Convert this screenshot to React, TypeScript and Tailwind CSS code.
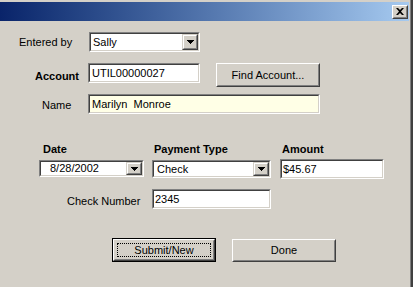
import React from 'react';

const Sunken: React.FC<{ className?: string; bg?: string; children?: React.ReactNode }> = ({ className = '', bg = 'bg-white', children }) => (
  <div className={`border border-t-[#808080] border-l-[#808080] border-b-white border-r-white ${className}`}>
    <div className={`h-full flex items-center border border-t-[#404040] border-l-[#404040] border-b-[#d4d0c8] border-r-[#d4d0c8] ${bg}`}>
      {children}
    </div>
  </div>
);

const DropButton: React.FC = () => (
  <div className="w-[16px] h-full border border-t-[#d4d0c8] border-l-[#d4d0c8] border-b-[#404040] border-r-[#404040]">
    <div className="h-full flex items-center justify-center bg-[#d4d0c8] border border-t-white border-l-white border-b-[#808080] border-r-[#808080]">
      <svg width="7" height="4" viewBox="0 0 7 4">
        <path d="M0 0h7v1h-1v1h-1v1h-1v1h-1v-1h-1v-1h-1v-1h-1z" fill="#000" />
      </svg>
    </div>
  </div>
);

const Combo: React.FC<{ value: string; className: string; textPad?: string }> = ({ value, className, textPad = 'pl-[2px]' }) => (
  <Sunken className={className}>
    <span className={`flex-1 ${textPad} leading-none`}>{value}</span>
    <DropButton />
  </Sunken>
);

const Button: React.FC<{ label: string; className: string; isDefault?: boolean }> = ({ label, className, isDefault }) => (
  <div className={`${isDefault ? 'border border-black' : ''} ${className}`}>
    <div className="h-full border border-t-white border-l-white border-b-[#404040] border-r-[#404040]">
      <div className="h-full p-[2px] bg-[#d4d0c8] border border-t-[#d4d0c8] border-l-[#d4d0c8] border-b-[#808080] border-r-[#808080]">
        <div className={`h-full flex items-center justify-center ${isDefault ? 'border border-dotted border-black' : ''}`}>
          {label}
        </div>
      </div>
    </div>
  </div>
);

export default function App() {
  return (
    <div className="w-[413px] h-[287px] overflow-hidden bg-[#d4d0c8] border-r-2 border-[#404040] text-[11px] text-black font-['Liberation_Sans',Arial,sans-serif]">
      <div className="h-full border-r border-[#808080] pt-[2px] pr-[1px]">
        {/* Title bar */}
        <div className="h-[19px] flex items-center justify-end pr-[1px] bg-linear-to-r from-[#0a246a] to-[#a6caf0]">
          <div className="w-[16px] h-[14px] border border-t-white border-l-white border-b-[#404040] border-r-[#404040]">
            <div className="h-full flex items-center justify-center bg-[#d4d0c8] border border-t-[#d4d0c8] border-l-[#d4d0c8] border-b-[#808080] border-r-[#808080]">
              <svg width="8" height="7" viewBox="0 0 8 7">
                <path d="M0 0h2l2 2 2-2h2l-3 3.5 3 3.5h-2l-2-2-2 2h-2l3-3.5z" fill="#000" />
              </svg>
            </div>
          </div>
        </div>

        <div className="flex flex-col">
          {/* Entered by */}
          <div className="mt-[11px] flex items-center h-[20px]">
            <div className="w-[89px] pl-[19px]">Entered by</div>
            <Combo value="Sally" className="w-[111px] h-[20px]" textPad="pl-[2px]" />
          </div>

          {/* Account */}
          <div className="mt-[11px] flex items-start h-[24px]">
            <div className="w-[88px] pl-[35px] h-[20px] pt-[7px] flex items-center font-bold">Account</div>
            <Sunken className="w-[112px] h-[20px]">
              <span className="pl-[2px] leading-none">UTIL00000027</span>
            </Sunken>
            <Button label="Find Account..." className="ml-[16px] w-[104px] h-[24px]" />
          </div>

          {/* Name */}
          <div className="mt-[7px] flex items-center h-[20px]">
            <div className="w-[88px] pl-[42px] pt-[3px]">Name</div>
            <Sunken className="w-[232px] h-[20px]" bg="bg-[#ffffe6]">
              <span className="pl-[2px] leading-none whitespace-pre">Marilyn  Monroe</span>
            </Sunken>
          </div>

          {/* Date / Payment Type / Amount */}
          <div className="mt-[29px] ml-[39px] flex items-start">
            <div className="w-[113px] flex flex-col">
              <div className="pl-[4px] h-[16px] font-bold leading-[13px]">Date</div>
              <Combo value="8/28/2002" className="mt-[1px] w-[105px] h-[17px]" textPad="pl-[9px]" />
            </div>
            <div className="w-[128px] flex flex-col">
              <div className="pl-[2px] h-[16px] font-bold leading-[13px]">Payment Type</div>
              <Combo value="Check" className="mt-[1px] w-[119px] h-[18px]" textPad="pl-[3px]" />
            </div>
            <div className="w-[104px] flex flex-col">
              <div className="pl-[2px] h-[16px] font-bold leading-[13px]">Amount</div>
              <Sunken className="w-[104px] h-[20px]">
                <span className="pl-[1px] leading-none">$45.67</span>
              </Sunken>
            </div>
          </div>

          {/* Check Number */}
          <div className="mt-[10px] flex items-center h-[20px]">
            <div className="w-[152px] pl-[67px] pt-[4px]">Check Number</div>
            <Sunken className="w-[119px] h-[20px]">
              <span className="pl-[1px] leading-none">2345</span>
            </Sunken>
          </div>

          {/* Buttons */}
          <div className="mt-[29px] ml-[112px] flex items-center gap-[16px]">
            <Button label="Submit/New" className="w-[104px] h-[24px]" isDefault />
            <Button label="Done" className="w-[104px] h-[23px]" />
          </div>
        </div>
      </div>
    </div>
  );
}
